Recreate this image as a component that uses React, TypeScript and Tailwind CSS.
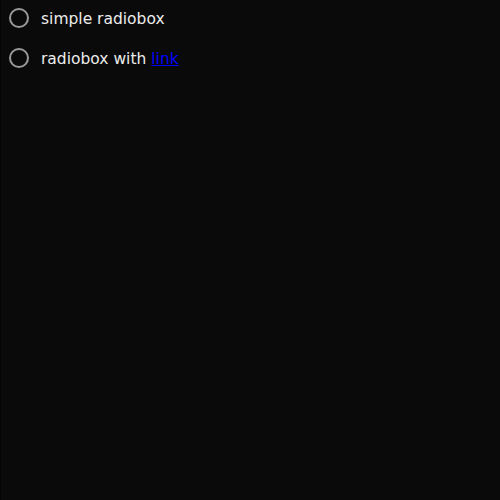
import React from 'react';

function Radio({ children }: { children: React.ReactNode }) {
  return (
    <label className="flex items-center h-10 cursor-pointer">
      <span className="ml-[8px] w-5 h-5 rounded-full border-2 border-[#9a9a9a] shrink-0" />
      <span className="ml-3 pt-[3px] text-[15.5px] text-[#ececec]">{children}</span>
    </label>
  );
}

export default function App() {
  return (
    <div className="h-[500px] overflow-hidden bg-[#0a0a0a] border-l border-[#050505] font-['DejaVu_Sans',sans-serif]">
      <div className="-mt-[2px]">
        <Radio>simple radiobox</Radio>
        <Radio>
          radiobox with{' '}
          <a href="#" className="text-[#0000ff] underline">
            link
          </a>
        </Radio>
      </div>
    </div>
  );
}
